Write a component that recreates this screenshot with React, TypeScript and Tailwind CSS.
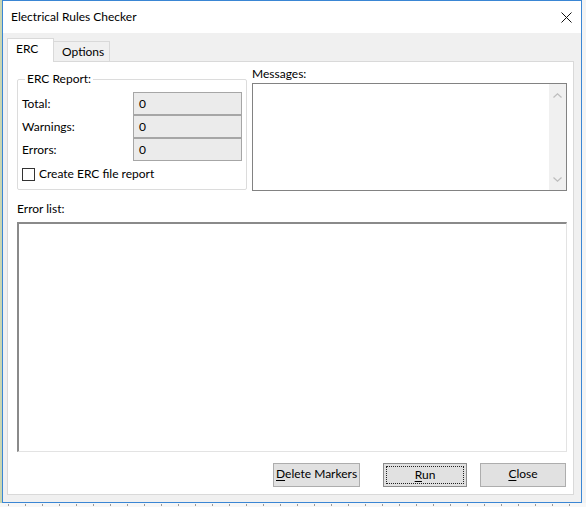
import React from "react";

function CloseGlyph() {
  return (
    <svg width="11" height="11" viewBox="0 0 11 11" className="block">
      <path d="M0.5 0.5 L10.5 10.5 M10.5 0.5 L0.5 10.5" stroke="#111" strokeWidth="1" fill="none" />
    </svg>
  );
}

function Chevron({ up }: { up?: boolean }) {
  return (
    <svg width="9" height="5" viewBox="0 0 9 5" className="block">
      <path
        d={up ? "M0.5 4.5 L4.5 0.8 L8.5 4.5" : "M0.5 0.5 L4.5 4.2 L8.5 0.5"}
        stroke="#bdbdbd"
        strokeWidth="1.2"
        fill="none"
      />
    </svg>
  );
}

function ReadOnlyRow({ label }: { label: string }) {
  return (
    <div className="flex h-[23px] items-center">
      <span className="flex-1">{label}</span>
      <div className="flex h-[23px] w-[109px] items-center border border-[#a6a6a6] bg-[#ebebeb] pl-[5px]">
        0
      </div>
    </div>
  );
}

function DialogButton({
  mnemonic,
  rest,
  width,
  focused,
}: {
  mnemonic: string;
  rest: string;
  width: string;
  focused?: boolean;
}) {
  return (
    <button
      type="button"
      className={`h-[24px] ${width} border ${
        focused ? "border-[#8c8c8c]" : "border-[#adadad]"
      } bg-[#e1e1e1] p-[2px]`}
    >
      <span
        className={`block h-full w-full whitespace-nowrap text-center leading-[16px] ${
          focused ? "border border-dotted border-[#222]" : "pt-[0px]"
        }`}
      >
        <span className="underline underline-offset-2">{mnemonic}</span>
        {rest}
      </span>
    </button>
  );
}

export default function App() {
  return (
    <div className="h-[507px] w-[586px] overflow-hidden bg-[#f6f6f6] font-[Lato,'Noto_Sans',sans-serif] text-[12px] leading-[16px] text-black">
      <div className="flex h-[503px]">
        <div className="w-[2px] bg-[#c9d6b3]" />

        {/* dialog window */}
        <div className="flex w-[580px] flex-col border border-[#3a86d4] bg-[#f0f0f0]">
          <div className="flex h-[32px] items-center bg-white pl-[8px] pr-[9px]">
            <span className="flex-1">Electrical Rules Checker</span>
            <CloseGlyph />
          </div>

          <div className="flex flex-1 flex-col pl-[4px] pr-[7px] pt-[5px] pb-[7px]">
            {/* tabs */}
            <div className="flex h-[23px] items-end">
              <div className="relative z-10 -mb-px flex h-[24px] w-[47px] items-start border border-b-0 border-[#d9d9d9] bg-white pl-[8px] pt-[2px]">
                ERC
              </div>
              <div className="flex h-[20px] w-[56px] items-start border border-b-0 border-l-0 border-[#d9d9d9] bg-[#f0f0f0] pl-[8px] pt-[2px]">
                Options
              </div>
            </div>

            {/* tab panel */}
            <div className="flex flex-1 flex-col border border-[#d9d9d9] bg-white pl-[9px] pr-[6px] pt-[4px] pb-[7px]">
              <div className="flex gap-[5px]">
                <fieldset className="mt-[5px] w-[230px] self-start rounded-[2px] border border-[#dcdcdc] px-[4px] pt-[5px] pb-[7px]">
                  <legend className="ml-[3px] px-[2px]">ERC Report:</legend>
                  <ReadOnlyRow label="Total:" />
                  <ReadOnlyRow label="Warnings:" />
                  <ReadOnlyRow label="Errors:" />
                  <label className="mt-[5px] flex h-[16px] items-center gap-[4px]">
                    <span className="block h-[13px] w-[13px] border border-[#333] bg-white" />
                    Create ERC file report
                  </label>
                </fieldset>

                <div className="flex w-[315px] flex-col">
                  <div className="h-[17px]">Messages:</div>
                  <div className="flex h-[108px] border border-[#828282] bg-white">
                    <div className="flex-1" />
                    <div className="flex w-[17px] flex-col items-center justify-between bg-[#f0f0f0] pt-[9px] pb-[8px]">
                      <Chevron up />
                      <Chevron />
                    </div>
                  </div>
                </div>
              </div>

              <div className="mt-[10px] h-[16px]">Error list:</div>
              <div className="mt-[5px] flex-1 border-t-2 border-l-2 border-r border-b border-t-[#8a8a8a] border-l-[#8a8a8a] border-r-[#e3e3e3] border-b-[#e3e3e3] bg-white" />

              <div className="mt-[11px] flex justify-end pr-[1px]">
                <DialogButton mnemonic="D" rest="elete Markers" width="w-[87px]" />
                <div className="w-[23px]" />
                <DialogButton mnemonic="R" rest="un" width="w-[84px]" focused />
                <div className="w-[13px]" />
                <DialogButton mnemonic="C" rest="lose" width="w-[86px]" />
              </div>
            </div>
          </div>
        </div>

        <div className="flex-1 bg-[#f3f3f3]" />
      </div>
      <div className="h-[4px] bg-[#f7f7f7] bg-[radial-gradient(circle,#9a9a9a_0.8px,transparent_1px)] bg-[length:17px_4px]" />
    </div>
  );
}
